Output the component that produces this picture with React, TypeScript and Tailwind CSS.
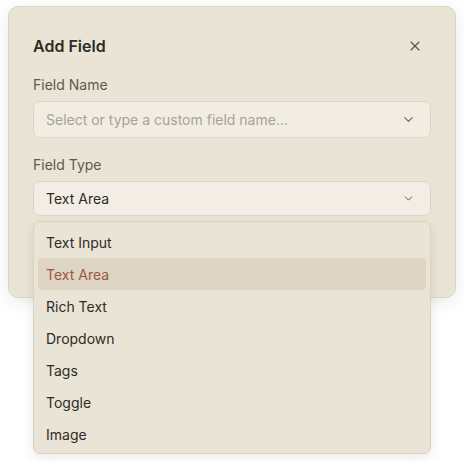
import { ChevronDown, X } from "lucide-react";

const fieldTypes = [
  "Text Input",
  "Text Area",
  "Rich Text",
  "Dropdown",
  "Tags",
  "Toggle",
  "Image",
];

export default function App() {
  const selected = "Text Area";

  return (
    <div
      className="min-h-[461px] w-full bg-white px-2 pt-[6px]"
      style={{ fontFamily: "Inter, 'Liberation Sans', sans-serif" }}
    >
      {/* Dialog */}
      <div className="h-[292px] w-[448px] rounded-[10px] border border-[#ddd7c8] bg-[#e9e4d6] px-[24px] pt-[28px] shadow-[0_4px_16px_rgba(60,50,30,0.10)]">
        <div className="flex items-center justify-between">
          <h2 className="text-[16px] font-semibold leading-[22px] text-[#2f2b22]">
            Add Field
          </h2>
          <button className="mr-[8px] text-[#5c5648]">
            <X className="h-4 w-4" strokeWidth={1.75} />
          </button>
        </div>

        {/* Field Name */}
        <label className="mt-[18px] block text-[14px] leading-[20px] text-[#5f594b]">
          Field Name
        </label>
        <div className="mt-[6px] flex h-[37px] items-center justify-between rounded-[7px] border border-[#ddd6c6] bg-[#f1ede3] pl-[12px] pr-[14px]">
          <span className="text-[14px] text-[#a8a295]">
            Select or type a custom field name...
          </span>
          <ChevronDown className="h-[15px] w-[15px] text-[#6a6455]" strokeWidth={1.75} />
        </div>

        {/* Field Type */}
        <label className="mt-[17px] block text-[14px] leading-[20px] text-[#5f594b]">
          Field Type
        </label>
        <div className="relative mt-[6px]">
          <div className="flex h-[35px] items-center justify-between rounded-[7px] border border-[#ddd6c6] bg-[#f2eee5] pl-[12px] pr-[15px]">
            <span className="text-[14px] text-[#2f2b22]">{selected}</span>
            <ChevronDown className="h-[13px] w-[13px] text-[#5c5648]" strokeWidth={1.75} />
          </div>

          {/* Dropdown list */}
          <ul className="absolute left-0 right-0 top-[40px] z-10 rounded-[7px] border border-[#d9d2c1] bg-[#e9e4d6] px-[4px] pt-[4px] pb-[3px] shadow-[0_4px_12px_rgba(60,50,30,0.10)]">
            {fieldTypes.map((type) => (
              <li
                key={type}
                className={`flex h-[32px] items-center rounded-[4px] px-[8px] text-[14px] ${
                  type === selected
                    ? "bg-[#dfd5c4] text-[#9a5843]"
                    : "text-[#2f2b22]"
                }`}
              >
                {type}
              </li>
            ))}
          </ul>
        </div>
      </div>
    </div>
  );
}
